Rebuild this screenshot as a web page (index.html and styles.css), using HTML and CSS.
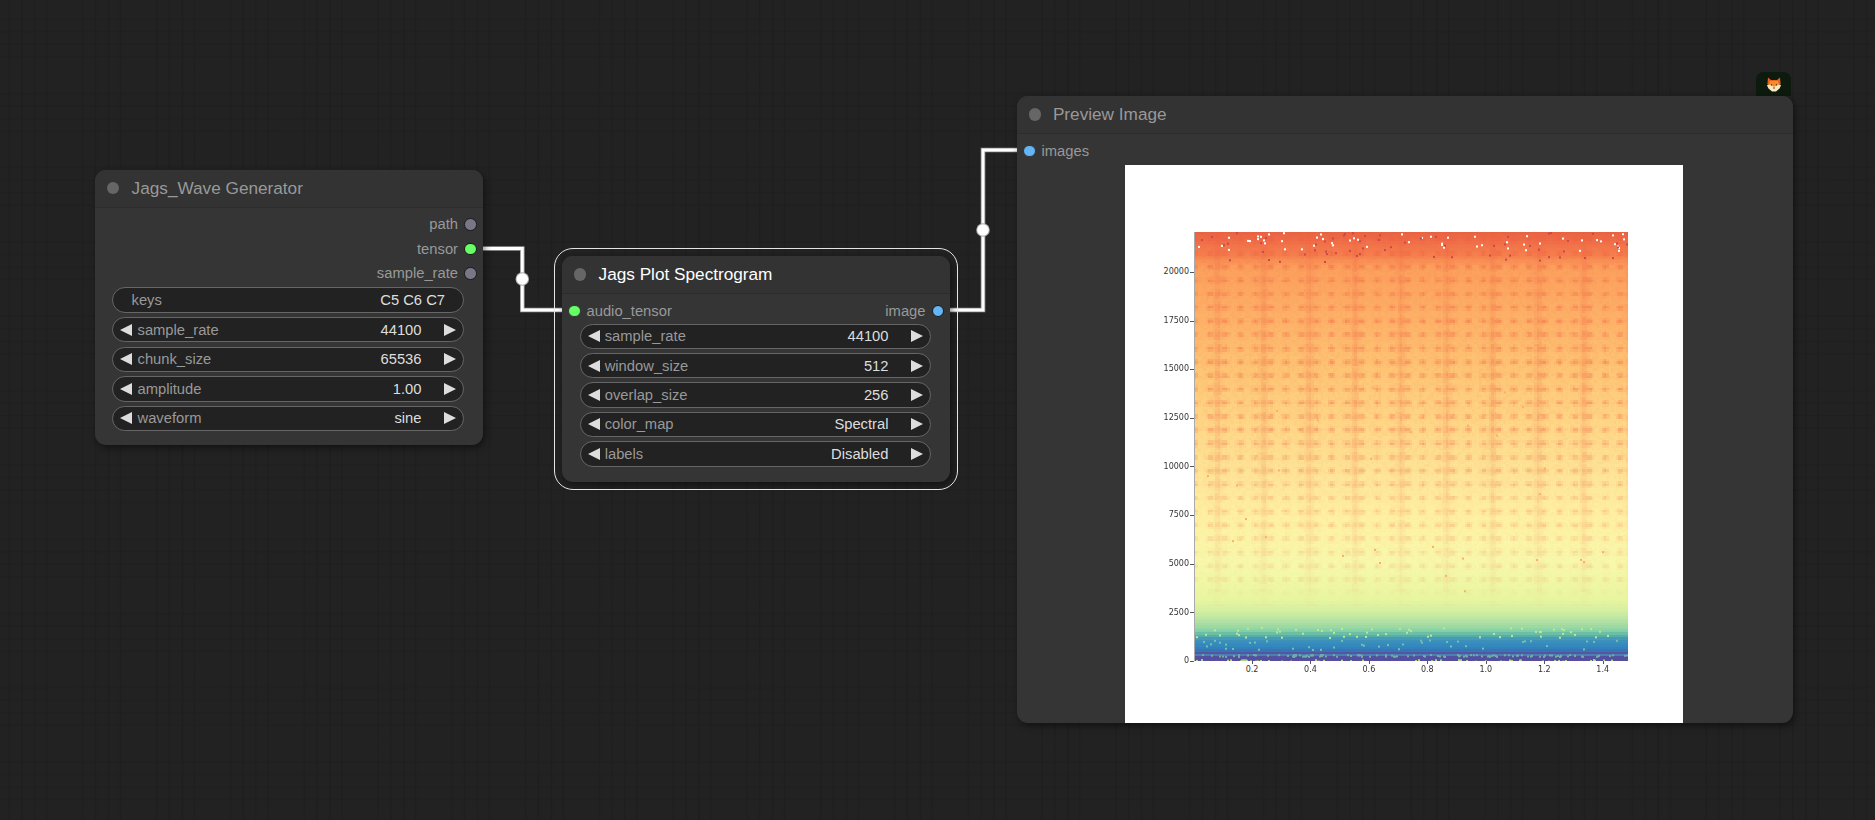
FILE: index.html
```html
<!DOCTYPE html>
<html lang="en">
<head>
<meta charset="utf-8">
<title>Node graph</title>
<link rel="stylesheet" href="styles.css">
</head>
<body>
<main class="canvas">
  <svg class="links" width="1875" height="820" viewBox="0 0 1875 820" aria-hidden="true">
    <g class="link-glow">
      <path d="M483 248.5H522.3V310H562"/>
      <path d="M950 310H983V150H1017"/>
    </g>
    <g class="link-core">
      <path d="M483 248.5H522.3V310H562"/>
      <path d="M950 310H983V150H1017"/>
    </g>
    <circle class="link-halo" cx="522.3" cy="279" r="6.8"/>
    <circle class="link-halo" cx="983" cy="230" r="6.8"/>
    <circle class="link-dot" cx="522.3" cy="279" r="5.8"/>
    <circle class="link-dot" cx="983" cy="230" r="5.8"/>
  </svg>

  <section class="node node-wave">
    <header class="node-title"><span class="title-dot"></span><span>Jags_Wave Generator</span></header>
    <div class="node-body">
      <div class="slot slot-out"><span>path</span><i class="port port-gray"></i></div>
      <div class="slot slot-out"><span>tensor</span><i class="port port-green"></i></div>
      <div class="slot slot-out"><span>sample_rate</span><i class="port port-gray"></i></div>
      <div class="widgets">
        <div class="widget widget-text"><span class="w-label">keys</span><span class="w-value">C5 C6 C7</span></div>
        <div class="widget"><i class="arrow arrow-l"></i><span class="w-label">sample_rate</span><span class="w-value">44100</span><i class="arrow arrow-r"></i></div>
        <div class="widget"><i class="arrow arrow-l"></i><span class="w-label">chunk_size</span><span class="w-value">65536</span><i class="arrow arrow-r"></i></div>
        <div class="widget"><i class="arrow arrow-l"></i><span class="w-label">amplitude</span><span class="w-value">1.00</span><i class="arrow arrow-r"></i></div>
        <div class="widget"><i class="arrow arrow-l"></i><span class="w-label">waveform</span><span class="w-value">sine</span><i class="arrow arrow-r"></i></div>
      </div>
    </div>
  </section>

  <section class="node node-plot">
    <header class="node-title"><span class="title-dot"></span><span>Jags Plot Spectrogram</span></header>
    <div class="node-body">
      <div class="slot slot-both">
        <i class="port port-green"></i><span class="slot-in-label">audio_tensor</span>
        <span>image</span><i class="port port-blue"></i>
      </div>
      <div class="widgets">
        <div class="widget"><i class="arrow arrow-l"></i><span class="w-label">sample_rate</span><span class="w-value">44100</span><i class="arrow arrow-r"></i></div>
        <div class="widget"><i class="arrow arrow-l"></i><span class="w-label">window_size</span><span class="w-value">512</span><i class="arrow arrow-r"></i></div>
        <div class="widget"><i class="arrow arrow-l"></i><span class="w-label">overlap_size</span><span class="w-value">256</span><i class="arrow arrow-r"></i></div>
        <div class="widget"><i class="arrow arrow-l"></i><span class="w-label">color_map</span><span class="w-value">Spectral</span><i class="arrow arrow-r"></i></div>
        <div class="widget"><i class="arrow arrow-l"></i><span class="w-label">labels</span><span class="w-value">Disabled</span><i class="arrow arrow-r"></i></div>
      </div>
    </div>
  </section>

  <div class="badge">
    <svg width="16" height="16" viewBox="0 0 16 16" aria-hidden="true">
      <path fill="#e8641c" d="M2 1.500 5 4h6l3-2.500.6 6.500L13 11H3L1.400 8z"/>
      <path fill="#f78a2c" d="M4 5h8l1 4-5 2-5-2z"/>
      <path fill="#fbe6c2" d="M.9 9.200 4.600 8.600 8 11l3.400-2.400 3.700.6-1.600 3.400L10 15.400H6L2.500 12.600z"/>
      <path fill="#3a2412" d="M4.800 8.200h1.300v1.300H4.800zM9.900 8.200h1.300v1.300H9.900zM7.200 11.400h1.600v1.200H7.200z"/>
    </svg>
  </div>

  <section class="node node-preview">
    <header class="node-title"><span class="title-dot"></span><span>Preview Image</span></header>
    <div class="preview-body">
      <div class="slot slot-in"><i class="port port-blue"></i><span>images</span></div>
      <div class="preview-wrap">
        <figure class="figure" id="figure">
          <canvas class="spectrogram" id="spectrogram" width="434" height="429"></canvas>
        </figure>
      </div>
    </div>
  </section>
</main>
<script src="script.js"></script>
</body>
</html>
```

FILE: styles.css
```css
* { box-sizing: border-box; }
html, body { margin: 0; height: 100%; overflow: hidden; }
body {
  font-family: "Liberation Sans", Arial, sans-serif;
  background: #222;
}
.canvas {
  position: relative;
  width: 1875px;
  height: 820px;
  background-color: #222;
  background-image:
    linear-gradient(90deg, transparent 8px, #1e1e1e 9px, transparent 10.5px, transparent 20.5px, #1e1e1e 21.5px, transparent 23px, transparent 33.5px, #1e1e1e 34.5px, transparent 36px, transparent 45.5px, #1e1e1e 46.5px, transparent 48px),
    linear-gradient(180deg, transparent 18px, #1f1f1f 19px, transparent 20.5px, transparent 30.5px, #1f1f1f 31.5px, transparent 33px, transparent 43px, #1f1f1f 44px, transparent 45.5px, transparent 55.5px, #1f1f1f 56.5px, transparent 58px);
  background-size: 73.8px 74.3px;
}
.links { position: absolute; left: 0; top: 0; }
.links path { fill: none; }
.link-glow path { stroke: #9d9d9d; stroke-width: 4.6; }
.link-core path { stroke: #fff; stroke-width: 2.8; }
.link-dot { fill: #fff; }
.link-halo { fill: #aaa; }

.node {
  position: absolute;
  background: #353535;
  border-radius: 11px;
  box-shadow: 2px 3px 7px rgba(0, 0, 0, .45);
  font-size: 14.76px;
  color: #999;
}
.node-wave { left: 95px; top: 169.5px; width: 388px; }
.node-plot { left: 562px; top: 256px; width: 388px; }
.node-plot::before {
  content: "";
  position: absolute;
  inset: -8px;
  border: 1.5px solid #e4e4e4;
  border-radius: 19px;
}
.node-preview { left: 1017px; top: 96px; width: 776px; height: 627px; }

.node-title {
  display: flex;
  align-items: center;
  height: 38px;
  padding-left: 12px;
  gap: 12.2px;
  font-size: 17.2px;
  color: #999;
  background: #333;
  border-bottom: 1px solid #2c2c2c;
  border-radius: 11px 11px 0 0;
}
.node-plot .node-title { color: #fff; }
.node-preview .node-title { gap: 11.5px; }
.title-dot {
  width: 12.4px;
  height: 12.4px;
  border-radius: 50%;
  background: #666;
  flex: none;
}

.node-body { padding: 4.5px 0 13.5px; }
.node-plot .node-body { padding-bottom: 15px; }
.slot {
  display: flex;
  align-items: center;
  height: 24.6px;
  padding: 0 6.5px;
  gap: 6px;
}
.slot-out { justify-content: flex-end; }
.slot-in { padding-left: 6px; height: 26.5px; margin-top: 3.7px; }
.slot-in-label { flex: 1; }
.port {
  width: 12.5px;
  height: 12.5px;
  border-radius: 50%;
  border: 1.4px solid #1a1a1a;
  flex: none;
}
.port-gray { background: #778; }
.port-green { background: #6f6; }
.port-blue { background: #64b5f6; }
.slot-both { padding: 0 6px; }
.slot-both .port-green,
.slot-in .port-blue { border-color: #353535; }

.widgets {
  display: flex;
  flex-direction: column;
  gap: 4.2px;
  margin: 1.7px 19px 0 17px;
}
.node-plot .widgets { gap: 4px; margin: .5px 19px 0 18px; }
.widget {
  display: flex;
  align-items: center;
  height: 25.4px;
  padding: 0 7px;
  background: #222;
  border: 1.2px solid #666;
  border-radius: 13px;
  color: #999;
}
.widget-text { padding: 0 18px 0 18.5px; }
.w-label { flex: 1; }
.w-value { color: #ddd; }
.arrow {
  width: 0;
  height: 0;
  flex: none;
  border-top: 6.2px solid transparent;
  border-bottom: 6.2px solid transparent;
}
.arrow-l { border-right: 12.5px solid #ddd; margin-right: 5.5px; }
.node-plot .arrow-l { margin-right: 4.7px; }
.arrow-r { border-left: 12.5px solid #ddd; margin-left: 22.5px; }

.badge {
  position: absolute;
  left: 1756px;
  top: 72px;
  width: 35px;
  height: 24px;
  display: flex;
  align-items: center;
  justify-content: center;
  background: #0d1a0e;
  border-radius: 8px 8px 0 0;
}

.preview-body { display: flex; flex-direction: column; }
.preview-wrap { display: flex; justify-content: center; margin: 1px 0 0 -2px; }

.figure {
  position: relative;
  margin: 0;
  width: 558px;
  height: 558px;
  background: #fff;
  overflow: hidden;
  font-family: "DejaVu Sans", sans-serif;
  font-size: 8px;
  color: #333;
}
.spectrogram {
  position: absolute;
  left: 69px;
  top: 67px;
  width: 434px;
  height: 429px;
  filter: blur(.4px);
}
.figure::before {
  content: "";
  position: absolute;
  z-index: 1;
  left: 69px;
  top: 67px;
  width: 1px;
  height: 429px;
  background: #aaa;
}
.tick-y, .tick-x { position: absolute; line-height: 10px; white-space: nowrap; }
.tick-y { right: 494px; transform: translateY(-5px); }
.tick-x { top: 500px; transform: translateX(-50%); }
.mark-y, .mark-x { position: absolute; background: #555; }
.mark-y { left: 65px; width: 4px; height: 1px; }
.mark-x { top: 496px; width: 1px; height: 3px; }
```

FILE: script.js
```js
(function () {
  var fig = document.getElementById('figure');
  var cv = document.getElementById('spectrogram');
  var ctx = cv.getContext('2d');
  var W = cv.width, H = cv.height;
  var CW = 2.4, CH = 2.4;
  var seed = 1234567;
  function rnd() {
    seed = (seed * 16807) % 2147483647;
    return seed / 2147483647;
  }
  // px above the bottom edge -> colour, after the Spectral map
  var ramp = [
    [0, [88, 78, 160]], [5, [84, 80, 160]], [6, [70, 130, 175]], [7, [60, 125, 185]],
    [8.5, [94, 79, 162]], [10, [55, 115, 180]], [15, [50, 136, 189]], [22, [63, 147, 184]],
    [26, [91, 181, 168]], [30, [133, 207, 165]], [38, [172, 223, 162]], [50, [212, 238, 160]],
    [62, [232, 246, 160]], [97, [247, 248, 170]], [145, [254, 240, 162]], [194, [254, 226, 148]],
    [243, [254, 212, 132]], [291, [254, 196, 116]], [340, [253, 178, 104]], [395, [252, 158, 92]],
    [405, [246, 128, 78]], [418, [241, 112, 72]], [429, [232, 98, 66]]
  ];
  function color(d) {
    for (var i = 1; i < ramp.length; i++) {
      if (d <= ramp[i][0]) {
        var a = ramp[i - 1], b = ramp[i], t = (d - a[0]) / (b[0] - a[0]);
        return [0, 1, 2].map(function (k) { return a[1][k] + (b[1][k] - a[1][k]) * t; });
      }
    }
    return ramp[ramp.length - 1][1].slice();
  }
  function paint(c, x, y, w, h) {
    ctx.fillStyle = 'rgb(' + Math.round(c[0]) + ',' + Math.round(c[1]) + ',' + Math.round(c[2]) + ')';
    ctx.fillRect(x, y, w, h);
  }
  var cols = Math.ceil(W / CW), rows = Math.ceil(H / CH);
  for (var ix = 0; ix < cols; ix++) {
    for (var iy = 0; iy < rows; iy++) {
      var px = ix * CW, d = iy * CH + CH / 2;
      var c = color(d);
      var rowPhase = 0.5 + 0.5 * Math.cos(2 * Math.PI * d / 13.6);
      var colPhase = 0.5 + 0.5 * Math.cos(2 * Math.PI * px / 15.2);
      var band = Math.pow(0.5 + 0.5 * Math.cos(2 * Math.PI * (px - 23) / 45.8), 18);
      var dots = Math.pow(rowPhase, 3) * Math.pow(colPhase, 2);
      var amp = d > 70 ? 0.3 + Math.min(0.7, (d - 70) / 260) : 0.12;
      var k = (dots * 0.4 + band * 0.34 * (0.4 + 0.6 * rowPhase) + (rnd() - 0.45) * 0.1) * amp;
      if (d > 55) {
        var m = Math.max(0, k);
        c = [c[0] + (236 - c[0]) * m, c[1] + (90 - c[1]) * m, c[2] + (62 - c[2]) * m];
        if (k < 0) { c[1] -= k * 30; c[2] -= k * 40; }
      }
      paint(c, Math.floor(px), Math.floor(H - d - CH / 2), Math.ceil(CW), Math.ceil(CH));
    }
  }
  // fine specks: rare bins that stand out from the bands around them
  function specks(count, dMin, dMax, c) {
    for (var i = 0; i < count; i++) {
      var sx = Math.floor(rnd() * W), sd = dMin + rnd() * (dMax - dMin);
      paint(c, sx, H - sd, 2, 2);
    }
  }
  specks(55, 411, 429, [255, 255, 255]);
  specks(60, 400, 429, [205, 70, 75]);
  specks(30, 70, 330, [253, 175, 105]);
  specks(60, 24, 34, [190, 230, 150]);
  specks(40, 12, 22, [120, 190, 170]);
  specks(110, 5, 7, [110, 175, 165]);
  specks(60, 0, 2, [170, 215, 130]);

  function el(cls, text, style, value) {
    var e = document.createElement('span');
    e.className = cls;
    if (text) e.textContent = text;
    e.style[style] = value + 'px';
    fig.appendChild(e);
  }
  var ys = ['20000', '17500', '15000', '12500', '10000', '7500', '5000', '2500', '0'];
  ys.forEach(function (label, i) {
    var v = 20000 - i * 2500;
    var top = 496 - v * 429 / 22050;
    el('tick-y', label, 'top', top);
    el('mark-y', '', 'top', Math.round(top));
  });
  ['0.2', '0.4', '0.6', '0.8', '1.0', '1.2', '1.4'].forEach(function (label, i) {
    var left = 127 + i * 58.45;
    el('tick-x', label, 'left', left);
    el('mark-x', '', 'left', Math.round(left));
  });
})();
```
